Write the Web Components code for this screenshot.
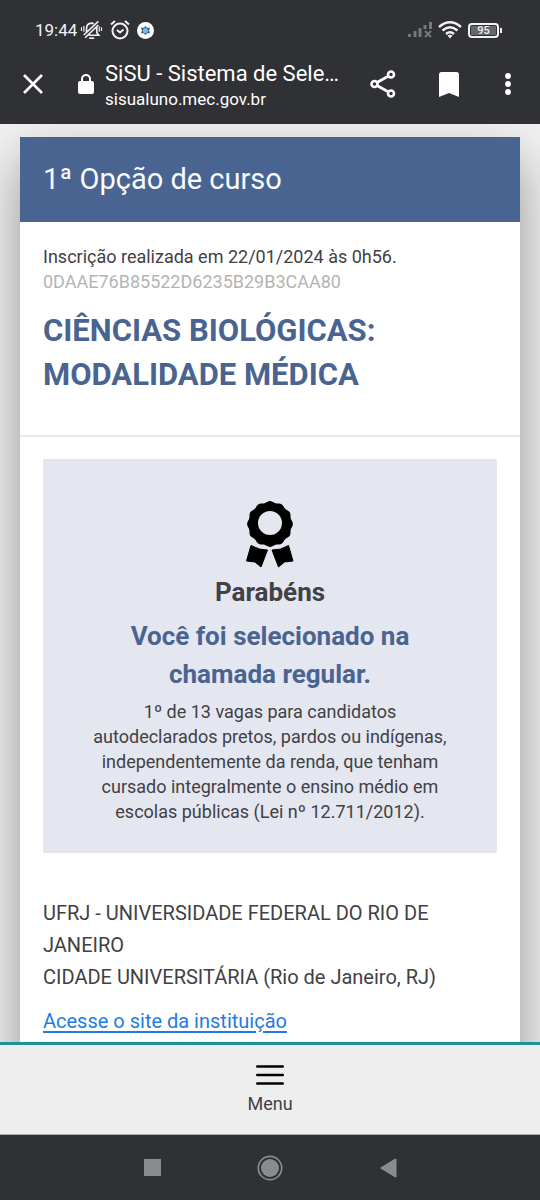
<!DOCTYPE html>
<html lang="pt-BR">
<head>
<meta charset="utf-8">
<meta name="viewport" content="width=device-width, initial-scale=1">
<title>SiSU - Sistema de Seleção Unificada</title>
<style>
  body { margin: 0; font-family: Roboto, "Liberation Sans", sans-serif; color: #414145; }
</style>
</head>
<body>
<phone-shell>
  <status-bar slot="top" time="19:44" battery="95"></status-bar>
  <browser-bar slot="top">
    <span slot="title">SiSU - Sistema de Seleção Unificada</span>
    <span slot="host">sisualuno.mec.gov.br</span>
  </browser-bar>
  <course-card>
    <span slot="heading">1ª Opção de curso</span>
    <course-summary slot="summary">
      <span slot="date">Inscrição realizada em 22/01/2024 às 0h56.</span>
      <span slot="code">0DAAE76B85522D6235B29B3CAA80</span>
      <span slot="course">CIÊNCIAS BIOLÓGICAS: MODALIDADE MÉDICA</span>
    </course-summary>
    <result-panel>
      <span slot="greeting">Parabéns</span>
      <span slot="result">Você foi selecionado na chamada regular.</span>
      1º de 13 vagas para candidatos autodeclarados pretos, pardos ou indígenas, independentemente da renda, que tenham cursado integralmente o ensino médio em escolas públicas (Lei nº 12.711/2012).
    </result-panel>
    <institution-info href="#instituicao">
      <span slot="name">UFRJ - UNIVERSIDADE FEDERAL DO RIO DE JANEIRO</span>
      <span slot="campus">CIDADE UNIVERSITÁRIA (Rio de Janeiro, RJ)</span>
      Acesse o site da instituição
    </institution-info>
  </course-card>
  <site-menu slot="bottom">Menu</site-menu>
  <system-nav slot="bottom"></system-nav>
</phone-shell>

<script>
const define = (name, html, setup) => {
  const template = document.createElement('template');
  template.innerHTML = html;
  customElements.define(name, class extends HTMLElement {
    constructor() {
      super();
      this.attachShadow({ mode: 'open' }).append(template.content.cloneNode(true));
    }
    connectedCallback() { if (setup) setup(this, this.shadowRoot); }
  });
};

define('phone-shell', `
<style>
  :host { display: flex; flex-direction: column; height: 100vh; background: #f0f0f0; }
  header, footer { flex: none; }
  main { flex: 1; min-height: 0; overflow-y: auto; scrollbar-width: none; padding: 13px 20px 0; }
</style>
<header><slot name="top"></slot></header>
<main><slot></slot></main>
<footer><slot name="bottom"></slot></footer>`);

define('status-bar', `
<style>
  :host { display: flex; align-items: center; height: 32px; padding: 14px 38px 0 35px; background: #303135; color: #f2f2f2; font-size: 17px; }
  .group { display: flex; align-items: center; }
  .left { gap: 7px; }
  .right { gap: 6px; margin-left: auto; }
  time { margin-right: -4px; }
  svg { display: block; }
  .battery { display: flex; align-items: center; }
  .cell { box-sizing: border-box; width: 31px; height: 15px; border: 2px solid #f2f2f2; border-radius: 4px; padding: 1px; }
  .level { background: #66676a; font-size: 11px; line-height: 9px; text-align: center; font-weight: 500; }
  .tip { width: 2px; height: 5px; background: #f2f2f2; margin-left: 1px; }
</style>
<div class="group left">
  <time></time>
  <svg width="23" height="20" viewBox="0 0 24 22" fill="none" stroke="#f2f2f2" stroke-width="1.800">
    <path d="M6.500 13V9.500Q6.500 4 12 3.500Q13.500 3.500 14.500 4M17.800 8V14L20 16.800H9M3.500 16.500L19.500 1.500M5 19.500L19.500 5.500"/><path d="M9.500 20H15"/><path d="M1 8V12M3.600 6.500V13M23 8V12M20.500 7V13" stroke-width="1.300"/>
  </svg>
  <svg width="20" height="20" viewBox="0 0 20 20" fill="none" stroke="#f2f2f2" stroke-width="2">
    <circle cx="10" cy="11" r="7.500"/><path d="M1 4.500L5 1M15 1L19 4.500"/><path d="M7 10L10 12.500L13.500 9.500"/>
  </svg>
  <svg width="17" height="17" viewBox="0 0 17 17">
    <circle cx="8.500" cy="8.500" r="8.500" fill="#fff"/>
    <path d="M8.500 4L10 5.700H13L12 8.500L13 11.300H10L8.500 13L7 11.300H4L5 8.500L4 5.700H7Z" fill="#345c85"/><circle cx="8.500" cy="8.500" r="2.600" fill="#78b5ed"/>
  </svg>
</div>
<div class="group right">
  <svg width="24" height="16" viewBox="0 0 24 16" stroke="#77787b" fill="none">
    <path d="M1.500 12V15M7 9V15M12 6V15M17 3V7M22.500 0V7" stroke-width="3"/><path d="M17 9L23 15M23 9L17 15" stroke-width="2"/>
  </svg>
  <svg width="24" height="18" viewBox="0 0 24 18" fill="none" stroke="#f2f2f2" stroke-width="2.400">
    <path d="M1 6Q12 -3.500 23 6M4.500 9.500Q12 3 19.500 9.500M8 13Q12 9.500 16 13"/><path d="M9.500 14.500Q12 13 14.500 14.500L12 17.500Z" fill="#f2f2f2" stroke="none"/>
  </svg>
  <div class="battery"><div class="cell"><div class="level"></div></div><div class="tip"></div></div>
</div>`, (el, root) => {
  root.querySelector('time').textContent = el.getAttribute('time');
  root.querySelector('.level').textContent = el.getAttribute('battery');
});

define('browser-bar', `
<style>
  :host { display: flex; align-items: center; height: 78px; background: #303135; color: #fff; }
  button { flex: none; border: 0; padding: 0 0 2px; background: none; display: grid; place-items: center; height: 48px; }
  .close { width: 66px; }
  .lock { flex: none; width: 39px; padding-bottom: 2px; display: grid; justify-content: center; }
  .page { flex: 1; min-width: 0; padding-top: 2px; display: grid; }
  .title { font-size: 22px; line-height: 26px; white-space: nowrap; overflow: hidden; text-overflow: ellipsis; }
  .host { font-size: 17px; line-height: 24px; }
  .share { width: 78px; }
  .save { width: 54px; }
  .more { width: 64px; }
</style>
<button class="close" aria-label="Fechar"><svg width="20" height="20" viewBox="0 0 20 20" stroke="#fff" stroke-width="2.600"><path d="M1 1L19 19M19 1L1 19"/></svg></button>
<span class="lock"><svg width="16" height="20" viewBox="0 0 16 20"><rect y="7" width="16" height="13" rx="2" fill="#fff"/><path d="M4 8V5A4 4 0 0 1 12 5V8" fill="none" stroke="#fff" stroke-width="2"/></svg></span>
<div class="page"><div class="title"><slot name="title"></slot></div><div class="host"><slot name="host"></slot></div></div>
<button class="share" aria-label="Compartilhar"><svg width="26" height="28" viewBox="0 0 26 28" fill="none" stroke="#fff" stroke-width="2.600"><circle cx="4.500" cy="14" r="3"/><circle cx="21" cy="4.500" r="3"/><circle cx="21" cy="23.500" r="3"/><path d="M7 12.500L18.500 6M7 15.500L18.500 22"/></svg></button>
<button class="save" aria-label="Favoritar"><svg width="20" height="25" viewBox="0 0 20 25"><path d="M0 25V2.500Q0 0 2.500 0H17.500Q20 0 20 2.500V25L10 21Z" fill="#fff"/></svg></button>
<button class="more" aria-label="Mais opções"><svg width="6" height="22" viewBox="0 0 6 22" fill="#fff"><circle cx="3" cy="3" r="2.900"/><circle cx="3" cy="11" r="2.900"/><circle cx="3" cy="19" r="2.900"/></svg></button>`);

define('course-card', `
<style>
  :host { display: block; background: #fff; box-shadow: 0 24px 48px rgba(0,0,0,.38); }
  h1 { margin: 0; padding: 20px 23px 21px; background: #4a6491; color: #f8fbff; font-size: 29px; line-height: 44px; font-weight: 400; }
  .summary { padding: 22px 23px 38px; border-bottom: 2px solid #e9e9eb; }
  .details { padding: 22px 23px 40px; }
</style>
<h1><slot name="heading"></slot></h1>
<div class="summary"><slot name="summary"></slot></div>
<div class="details"><slot></slot></div>`);

define('course-summary', `
<style>
  :host { display: block; font-size: 18px; line-height: 25px; }
  p { margin: 0; }
  .code { color: #b4b4b4; }
  h2 { margin: 15px 0 0; max-width: 400px; color: #4a6491; font-size: 31px; line-height: 44px; font-weight: 700; }
</style>
<p><slot name="date"></slot></p>
<p class="code"><slot name="code"></slot></p>
<h2><slot name="course"></slot></h2>`);

define('result-panel', `
<style>
  :host { display: block; padding: 42px 44px 29px; background: #e4e6f0; text-align: center; font-size: 18px; line-height: 25px; }
  svg { display: block; margin: 0 auto 5px; }
  h3, h4, p { margin: 0 0 6px; font-weight: 700; }
  h3 { font-size: 26px; line-height: 38px; }
  h4 { font-size: 26px; line-height: 38px; color: #4a6491; }
  p { margin: 0; font-weight: 400; }
</style>
<svg width="50" height="67" viewBox="0 0 50 67"><path class="seal" fill-rule="evenodd"/>
  <path d="M6 44.500Q15 49.500 22.500 49L16 66L10 61L1.500 60ZM43.500 44.500Q35 49.500 27 49L33.500 66L39.500 61L48 60Z" stroke="#000" stroke-linejoin="round"/></svg>
<h3><slot name="greeting"></slot></h3>
<h4><slot name="result"></slot></h4>
<p><slot></slot></p>`, (el, root) => {
  // Wavy outer edge of the seal, followed by its round hole.
  const points = [];
  for (let a = 0; a < 360; a += 3) {
    const t = a * Math.PI / 180;
    const r = 22.2 + 0.7 * Math.cos(12 * t);
    points.push((25 + r * Math.cos(t)).toFixed(2) + ' ' + (23 + r * Math.sin(t)).toFixed(2));
  }
  root.querySelector('.seal').setAttribute('d',
    'M' + points.join('L') + 'ZM13 22a12 12 0 1 0 24 0a12 12 0 1 0 -24 0Z');
});

define('institution-info', `
<style>
  :host { display: block; margin-top: 44px; font-size: 20px; line-height: 32px; }
  p { margin: 0; }
  a { display: inline-block; margin-top: 12px; color: #1f7ce0; text-underline-offset: 3px; }
</style>
<p><slot name="name"></slot></p>
<p><slot name="campus"></slot></p>
<a><slot></slot></a>`, (el, root) => {
  root.querySelector('a').href = el.getAttribute('href');
});

define('site-menu', `
<style>
  :host { display: block; position: relative; background: #eee; border-top: 3px solid #1c9292; border-bottom: 1px solid #aaa; }
  button { width: 100%; height: 89px; border: 0; padding: 2px 0 0; background: none; color: #414145; font: 18px/24px Roboto, "Liberation Sans", sans-serif; display: flex; flex-direction: column; align-items: center; justify-content: center; gap: 7px; }
</style>
<button><svg width="28" height="20" viewBox="0 0 28 20" stroke="#000" stroke-width="2.600" stroke-linecap="round"><path d="M1.300 1.500H26.700M1.300 10H26.700M1.300 18.500H26.700"/></svg><slot></slot></button>`);

define('system-nav', `
<style>
  :host { display: flex; justify-content: center; gap: 48px; height: 65px; background: #303135; }
  button { width: 70px; border: 0; padding: 0; background: none; display: grid; place-items: center; }
</style>
<button aria-label="Recentes"><svg width="17" height="17"><rect width="17" height="17" fill="#8a8b8d"/></svg></button>
<button aria-label="Início"><svg width="26" height="26" viewBox="0 0 26 26"><circle cx="13" cy="13" r="11.700" fill="none" stroke="#8a8b8d" stroke-width="1.700"/><circle cx="13" cy="13" r="9" fill="#8a8b8d"/></svg></button>
<button aria-label="Voltar"><svg width="17" height="20" viewBox="0 0 17 20"><path d="M1.500 10L15.500 1.500V18.500Z" fill="#8a8b8d" stroke="#8a8b8d" stroke-linejoin="round" stroke-width="2"/></svg></button>`);
</script>
</body>
</html>
